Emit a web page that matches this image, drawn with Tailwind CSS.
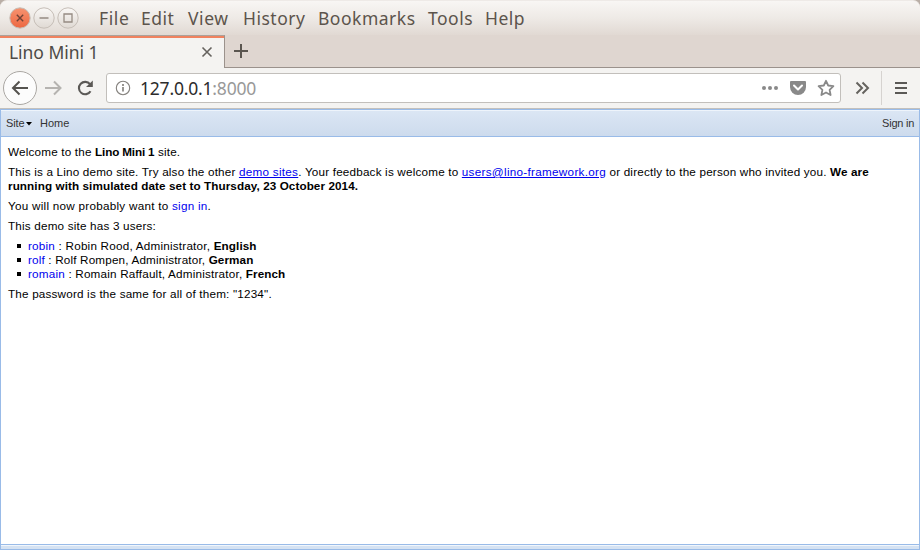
<!DOCTYPE html>
<html lang="en">
<head>
<meta charset="utf-8">
<title>Lino Mini 1</title>
<script src="https://cdn.jsdelivr.net/npm/@tailwindcss/browser@4"></script>
</head>
<body class="w-[920px] h-[550px] overflow-hidden flex flex-col bg-[#b9aea6] font-['Noto_Sans',sans-serif]">
<header class="h-[35px] shrink-0 rounded-t-[7px] bg-linear-to-b from-[#f8f6f4] via-[#eeeae6] to-[#e1d9d3] border-t border-[#eeeae7] flex items-center text-[#5c544c]">
  <svg class="ml-[8px] shrink-0" width="72" height="24" viewBox="0 0 72 24" fill="none">
    <defs>
      <linearGradient id="o" x2="0" y2="1"><stop stop-color="#f69370"/><stop offset="1" stop-color="#ed6842"/></linearGradient>
      <linearGradient id="g" x2="0" y2="1"><stop stop-color="#faf8f6"/><stop offset="1" stop-color="#dfd9d3"/></linearGradient>
    </defs>
    <g stroke="#c6beb7"><circle cx="12" cy="12" r="10.2" fill="url(#o)"/><circle cx="36" cy="12" r="10.2" fill="url(#g)"/><circle cx="60" cy="12" r="10.2" fill="url(#g)"/></g>
    <path d="M8.800 8.800l6.400 6.400M15.200 8.800l-6.400 6.400" stroke="#704337" stroke-width="1.4"/>
    <path d="M31.500 12h9M56 8h8v8h-8z" stroke="#958b83" stroke-width="1.3"/>
  </svg>
  <nav class="ml-[19px] flex text-[17.500px] leading-[34px] whitespace-nowrap">
    <span class="w-[42px] tracking-[.6px]">File</span><span class="w-[47px] tracking-[.5px]">Edit</span><span class="w-[55px] tracking-[.6px]">View</span><span class="w-[75px] tracking-[.5px]">History</span><span class="w-[110px] tracking-[.5px]">Bookmarks</span><span class="w-[57px] tracking-[.5px]">Tools</span><span class="tracking-[.5px]">Help</span>
  </nav>
</header>
<div class="h-[33px] shrink-0 flex bg-[#dfd6d0]">
  <div class="w-[225px] border-t border-t-[#aba19a] border-r border-r-[#9b928c] flex">
    <div class="flex-1 border-t-2 border-t-[#f0825f] bg-[#f4f3f1] flex items-center text-[#4d4a46]">
      <span class="ml-[9px] -mt-[3px] w-[192px] text-[17.500px] leading-[30px] tracking-[-.05px]">Lino Mini 1</span>
      <svg class="-mt-[3px]" width="12" height="12" fill="none" stroke="#65625e" stroke-width="1.6"><path d="M1.500 1.500l9 9M10.500 1.500l-9 9"/></svg>
    </div>
  </div>
  <div class="flex-1 border-b border-[#9b928c] flex items-center pl-[8px]">
    <svg width="16" height="16" fill="none" stroke="#5b5650" stroke-width="2"><path d="M8 1v14M1 8h14"/></svg>
  </div>
</div>
<div class="h-[41px] shrink-0 bg-[#f4f3f1] border-b border-[#c3c0bc] flex items-center">
  <svg class="shrink-0" width="106" height="40" viewBox="0 0 106 40" fill="none">
    <circle cx="20" cy="20" r="16.500" fill="#fcfcfc" stroke="#aaa7a3"/>
    <path d="M28 20H13M19.500 13.500L13 20l6.500 6.500" stroke="#55534f" stroke-width="2"/>
    <path d="M45 20h15M54 13.500l6.500 6.500-6.500 6.500" stroke="#b5b3b0" stroke-width="2"/>
    <path d="M90 16.200A6.200 6.200 0 1 0 90.500 23.200" stroke="#5b5956" stroke-width="2.1"/>
    <path d="M92.800 12.500v6.500h-6.800z" fill="#5b5956"/>
  </svg>
  <div class="w-[735px] h-[30px] shrink-0 rounded-[3px] border border-[#c2bfbb] bg-white flex items-center">
    <svg class="ml-[8px] shrink-0" width="16" height="16" fill="none"><circle cx="8" cy="8" r="6.700" stroke="#85827e" stroke-width="1.1"/><path d="M8 7v4.500M8 4v2" stroke="#77746f" stroke-width="1.5"/></svg>
    <span class="ml-[9px] w-[621px] shrink-0 text-[17.500px] leading-[28px] text-[#2c2c2c] tracking-[-.2px]">127.0.0.1<span class="text-[#999]">:8000</span></span>
    <svg class="shrink-0" width="78" height="22" viewBox="0 0 78 22" fill="none">
      <g fill="#898989"><circle cx="3" cy="11" r="2"/><circle cx="9" cy="11" r="2"/><circle cx="15" cy="11" r="2"/><path d="M30 4h14q1 0 1 1v5a8 8 0 0 1-16 0V5q0-1 1-1z"/></g>
      <path d="M33 8.500l4 4 4-4" stroke="#fff" stroke-width="2" stroke-linecap="round" stroke-linejoin="round"/>
      <path d="M65 3.800l2.200 4.700 5.200.7-3.800 3.600 1 5.200-4.600-2.500-4.600 2.500 1-5.200-3.800-3.600 5.200-.7z" stroke="#898989" stroke-width="1.8" stroke-linejoin="round"/>
    </svg>
  </div>
  <svg class="shrink-0" width="79" height="40" viewBox="0 0 79 40" fill="none"><path d="M15.500 14.500l5.500 5.500-5.500 5.500M21.500 14.500l5.500 5.500-5.500 5.500" stroke="#65635f" stroke-width="2"/><path d="M40.500 3v34" stroke="#d6d3d0"/><path d="M54 15h12M54 20h12M54 25h12" stroke="#5b5956" stroke-width="2"/></svg>
</div>
<div class="flex-1 min-h-0 flex flex-col border border-[#99bbe8] bg-white font-['Liberation_Sans',Arial,sans-serif]">
  <div class="h-[27px] shrink-0 border-t border-t-[#eef4fb] border-b border-b-[#99bbe8] bg-linear-to-b from-[#dbe6f4] to-[#cddbed] flex items-center px-[5px] text-[11px] text-[#333]">
    <span class="w-[18px] tracking-[-.1px]">Site</span>
    <svg class="ml-[2px]" width="6" height="4"><path d="M0 0h6L3 3.500z" fill="#000"/></svg>
    <span class="ml-[8px]">Home</span><span class="ml-auto tracking-[-.25px]">Sign in</span>
  </div>
  <main class="flex-1 px-[7px] pt-[8px] text-[11.700px] leading-[14px] tracking-[.19px] [&_b]:tracking-[.09px] text-black flex flex-col gap-[6px] whitespace-nowrap">
    <p>Welcome to the <b class="tracking-[-.15px]!">Lino Mini 1</b> site.</p>
    <p><span class="tracking-[.18px]">This is a Lino demo site. Try also the other </span><a class="text-[#0000ee] underline tracking-[.28px]">demo sites</a>. Your feedback is welcome to <a class="text-[#0000ee] underline tracking-[.29px]">users@lino-framework.org</a> or directly to the person who invited you. <b>We are<br>running with simulated date set to Thursday, 23 October 2014.</b></p>
    <p class="tracking-[.26px]">You will now probably want to <a class="text-[#0000ee]">sign in</a>.</p>
    <p>This demo site has 3 users:</p>
    <ul class="pl-[9px] [&>li]:flex [&>li]:items-center [&>li]:before:content-[''] [&>li]:before:size-[4px] [&>li]:before:bg-black [&>li]:before:mr-[7px] tracking-[.22px]">
      <li><span><a class="text-[#0000ee]">robin</a> : Robin Rood, Administrator, <b>English</b></span></li>
      <li class="tracking-[.17px]"><span><a class="text-[#0000ee]">rolf</a> : Rolf Rompen, Administrator, <b>German</b></span></li>
      <li class="tracking-[.2px]"><span><a class="text-[#0000ee]">romain</a> : Romain Raffault, Administrator, <b>French</b></span></li>
    </ul>
    <p>The password is the same for all of them: "1234".</p>
  </main>
  <footer class="h-[5px] shrink-0 border-t border-[#99bbe8] bg-[#d5e2f2]"><div class="h-px bg-[#f1f6fc]"></div></footer>
</div>
</body>
</html>
